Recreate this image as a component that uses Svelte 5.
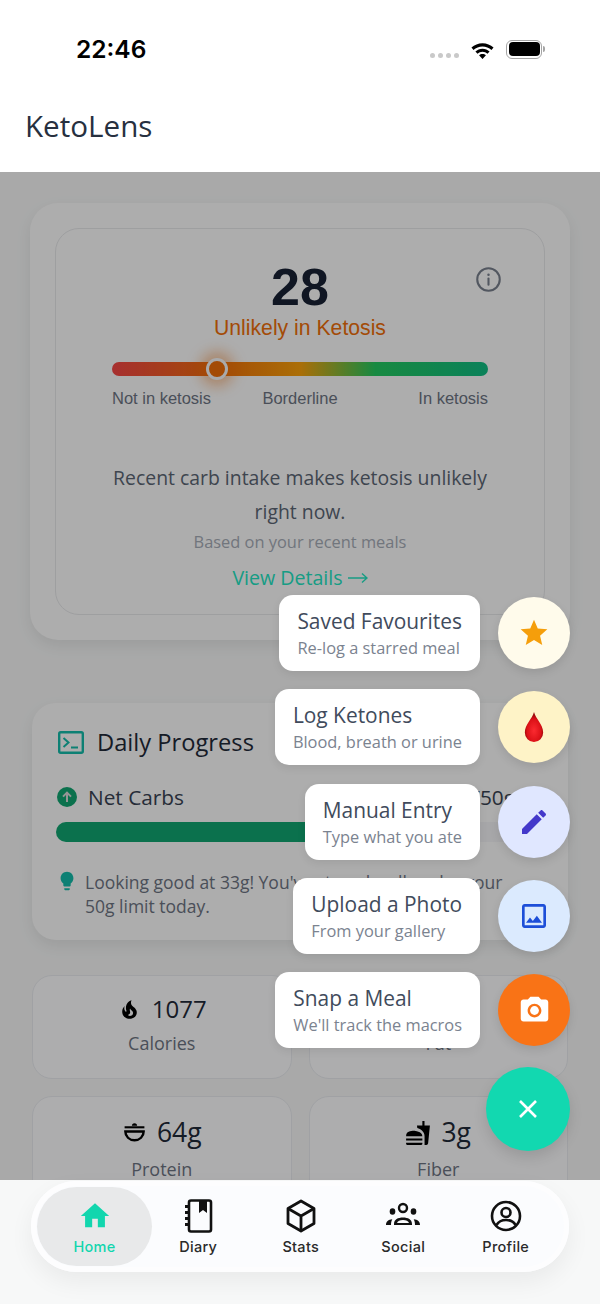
<script>
    const actions = [
        { title: "Saved Favourites", sub: "Re-log a starred meal", tone: "cream", icon: "star" },
        { title: "Log Ketones", sub: "Blood, breath or urine", tone: "sand", icon: "drop" },
        { title: "Manual Entry", sub: "Type what you ate", tone: "lilac", icon: "edit" },
        { title: "Upload a Photo", sub: "From your gallery", tone: "sky", icon: "image" },
        { title: "Snap a Meal", sub: "We'll track the macros", tone: "orange", icon: "camera" }
    ]

    const tabs = ["Home", "Diary", "Stats", "Social", "Profile"]
</script>

<div class="screen">
    <div class="status">
        <span class="time">22:46</span>
        <div class="status-icons">
            <div class="dots"><i></i><i></i><i></i><i></i></div>
            <svg class="wifi" viewBox="0 0 24 18" width="25" height="19">
                <path d="M12 3C7.9 3 4.3 4.6 1.4 7.1L3.4 9.4C5.7 7.3 8.7 6 12 6s6.3 1.3 8.6 3.4l2-2.3C19.7 4.6 16.1 3 12 3z" fill="#000"/>
                <path d="M12 8.2c-2.6 0-5 1-6.8 2.7l2 2.2c1.3-1.2 3-1.9 4.8-1.9s3.5.7 4.8 1.900l2-2.200C17 9.2 14.6 8.2 12 8.2z" fill="#000"/>
                <path d="M12 13.4c-1.3 0-2.4.5-3.3 1.2L12 18l3.3-3.4c-.9-.7-2-1.2-3.3-1.2z" fill="#000"/>
            </svg>
            <div class="battery"><span></span></div>
        </div>
    </div>

    <header class="top">KetoLens</header>

    <main class="body">
        <section class="card score-card">
            <div class="score-inner">
                <svg class="info" viewBox="0 0 24 24" width="25" height="25" fill="none" stroke="#767d8a" stroke-width="2">
                    <circle cx="12" cy="12" r="10.800"/>
                    <path d="M12 11v6" stroke-linecap="round"/>
                    <circle cx="12" cy="7.400" r="1.200" fill="#767d8a" stroke="none"/>
                </svg>
                <div class="score">28</div>
                <div class="verdict">Unlikely in Ketosis</div>
                <div class="gauge">
                    <div class="thumb"></div>
                </div>
                <div class="gauge-labels">
                    <span>Not in ketosis</span>
                    <span>Borderline</span>
                    <span>In ketosis</span>
                </div>
                <p class="summary">Recent carb intake makes ketosis unlikely right now.</p>
                <p class="basis">Based on your recent meals</p>
                <div class="details">
                    View Details
                    <svg viewBox="0 0 20 12" width="20" height="12" fill="none" stroke="#22e0bd" stroke-width="1.400">
                        <path d="M0 6h19M14 1.500L19 6l-5 4.500"/>
                    </svg>
                </div>
            </div>
        </section>

        <section class="card progress-card">
            <div class="progress-title">
                <svg viewBox="0 0 26 23" width="26" height="23" fill="none" stroke="#14b8a6" stroke-width="2.400">
                    <rect x="1.200" y="1.200" width="23.600" height="20.600" rx="1.500"/>
                    <path d="M5.500 7l5 4.500-5 4.500" stroke-width="2"/>
                    <path d="M13 16.500h7" stroke-width="2"/>
                </svg>
                <h2>Daily Progress</h2>
            </div>
            <div class="macro-row">
                <svg viewBox="0 0 20 20" width="20" height="20">
                    <circle cx="10" cy="10" r="10" fill="#10a36f"/>
                    <path d="M10 15V6M6 9.600L10 5.600l4 4" fill="none" stroke="#d6d6d6" stroke-width="2"/>
                </svg>
                <span class="macro-name">Net Carbs</span>
                <span class="macro-val">33g /50g</span>
            </div>
            <div class="track"><div class="fill" style="width: 66%"></div></div>
            <div class="tip">
                <svg viewBox="0 0 24 24" width="22" height="22" fill="#14b8a6">
                    <path d="M9 21c0 .5.4 1 1 1h4c.6 0 1-.5 1-1v-1H9v1zm3-19C8.100 2 5 5.100 5 9c0 2.400 1.200 4.500 3 5.700V17c0 .5.4 1 1 1h6c.6 0 1-.5 1-1v-2.300c1.800-1.300 3-3.400 3-5.700 0-3.900-3.100-7-7-7z"/>
                </svg>
                <p>Looking good at 33g! You've stayed well under your 50g limit today.</p>
            </div>
        </section>

        <section class="tiles">
            <div class="tile">
                <div class="tile-value">
                    <svg viewBox="0 0 24 24" width="25" height="25"><path d="M17.66 11.2C17.43 10.9 17.15 10.64 16.89 10.38C16.22 9.78 15.46 9.35 14.82 8.72C13.33 7.26 13 4.85 13.95 3C13 3.23 12.17 3.75 11.46 4.32C8.87 6.4 7.85 10.07 9.07 13.22C9.11 13.32 9.15 13.42 9.15 13.55C9.15 13.77 9 13.97 8.8 14.05C8.57 14.15 8.33 14.09 8.14 13.93C8.08 13.88 8.04 13.83 8 13.76C6.87 12.33 6.69 10.28 7.45 8.64C5.78 10 4.87 12.3 5 14.47C5.06 14.97 5.12 15.47 5.29 15.97C5.43 16.57 5.7 17.17 6 17.7C7.08 19.43 8.95 20.67 10.96 20.92C13.1 21.19 15.39 20.8 17.03 19.32C18.86 17.66 19.5 15 18.56 12.72L18.43 12.46C18.22 12 17.66 11.2 17.66 11.2M14.5 17.5C14.22 17.74 13.76 18 13.4 18.1C12.28 18.5 11.16 17.94 10.5 17.28C11.69 17 12.4 16.12 12.61 15.23C12.78 14.43 12.46 13.77 12.33 13C12.21 12.26 12.23 11.63 12.5 10.94C12.69 11.32 12.89 11.7 13.13 12C13.9 13 15.11 13.44 15.37 14.8C15.41 14.94 15.43 15.08 15.43 15.23C15.46 16.05 15.1 16.95 14.5 17.5H14.5Z"/></svg>
                    <span>1077</span>
                </div>
                <div class="tile-label">Calories</div>
            </div>
            <div class="tile">
                <div class="tile-value"></div>
                <div class="tile-label">Fat</div>
            </div>
            <div class="tile tall">
                <div class="tile-value">
                    <svg viewBox="0 0 24 20" width="25" height="21" fill="none" stroke="#000" stroke-width="2.300">
                        <path d="M9.500 3.500a2.500 2.500 0 0 1 5 0z" fill="#000" stroke="none"/>
                        <path d="M2.500 5h19" stroke-width="2"/>
                        <path d="M3.200 9h17.600c0 4.800-3.800 8.500-8.800 8.500S3.200 13.800 3.200 9z"/>
                    </svg>
                    <span>64g</span>
                </div>
                <div class="tile-label">Protein</div>
            </div>
            <div class="tile tall">
                <div class="tile-value">
                    <svg viewBox="0 0 24 24" width="26" height="26"><path d="M18.06 22.99h1.66c.84 0 1.53-.64 1.63-1.46L23 5.05h-5V1h-1.97v4.05h-4.97l.3 2.34c1.71.47 3.31 1.32 4.27 2.26 1.44 1.42 2.43 2.89 2.43 5.29v8.05zM1 21.99V21h15.03v.99c0 .55-.45 1-1.01 1H2.01c-.56 0-1.01-.45-1.01-1zm15.03-7c0-4.5-7.5-5-7.52-5-3.5 0-7.5.5-7.5 5h15.02zM1.02 17h15v2h-15z"/></svg>
                    <span>3g</span>
                </div>
                <div class="tile-label">Fiber</div>
            </div>
        </section>

        <div class="scrim"></div>

        <div class="fab-stack">
            {#each actions as action}
                <div class="action">
                    <div class="action-label">
                        <div class="action-title">{action.title}</div>
                        <div class="action-sub">{action.sub}</div>
                    </div>
                    <div class="action-btn {action.tone}">
                        {#if action.icon == "star"}
                            <svg viewBox="0 0 24 24" width="32" height="32" fill="#f59e0b"><path d="M12 17.27L18.18 21l-1.64-7.03L22 9.24l-7.19-.61L12 2 9.19 8.63 2 9.24l5.46 4.73L5.82 21z"/></svg>
                        {:else if action.icon == "drop"}
                            <svg viewBox="0 0 24 36" width="20" height="30">
                                <defs>
                                    <radialGradient id="blood" cx="0.5" cy="0.62" r="0.55">
                                        <stop offset="0" stop-color="#fb2a30"/>
                                        <stop offset="0.7" stop-color="#dc1117"/>
                                        <stop offset="1" stop-color="#8f0508"/>
                                    </radialGradient>
                                </defs>
                                <path d="M12 0C10 8 1 15 1 24.500a11 11.500 0 0 0 22 0C23 15 14 8 12 0z" fill="url(#blood)"/>
                            </svg>
                        {:else if action.icon == "edit"}
                            <svg viewBox="0 0 24 24" width="32" height="32" fill="#4338ca"><path d="M3 17.25V21h3.75L17.81 9.94l-3.75-3.75L3 17.25zM20.71 7.04c.39-.39.39-1.02 0-1.41l-2.34-2.34c-.39-.39-1.02-.39-1.41 0l-1.83 1.83 3.75 3.75 1.83-1.83z"/></svg>
                        {:else if action.icon == "image"}
                            <svg viewBox="0 0 24 24" width="32" height="32" fill="#1d4ed8"><path d="M19 5v14H5V5h14m0-2H5c-1.1 0-2 .9-2 2v14c0 1.1.9 2 2 2h14c1.1 0 2-.9 2-2V5c0-1.1-.9-2-2-2zm-4.86 8.86l-3 3.87L9 13.14 6 17h12l-3.86-5.14z"/></svg>
                        {:else}
                            <svg viewBox="0 0 24 24" width="33" height="33" fill="#fff"><circle cx="12" cy="12" r="3.2"/><path d="M9 2L7.17 4H4c-1.1 0-2 .9-2 2v12c0 1.1.9 2 2 2h16c1.1 0 2-.9 2-2V6c0-1.1-.9-2-2-2h-3.17L15 2H9zm3 15c-2.76 0-5-2.24-5-5s2.24-5 5-5 5 2.24 5 5-2.24 5-5 5z"/></svg>
                        {/if}
                    </div>
                </div>
            {/each}
            <button class="fab-main" aria-label="Close">
                <svg viewBox="0 0 20 20" width="20" height="20" fill="none" stroke="#fff" stroke-width="2.600">
                    <path d="M2 2l16 16M18 2L2 18"/>
                </svg>
            </button>
        </div>
    </main>

    <footer class="bottom">
        <nav class="tabbar">
            {#each tabs as tab, i}
                <div class="tab" class:active={i == 0}>
                    {#if tab == "Home"}
                        <svg viewBox="0 0 24 24" width="34" height="34" fill="#12d6ae"><path d="M10 20v-6h4v6h5v-8h3L12 3 2 12h3v8z"/></svg>
                    {:else if tab == "Diary"}
                        <svg viewBox="0 0 32 34" width="32" height="34">
                            <path d="M7 3.500a2 2 0 0 1 2-2h18a2 2 0 0 1 2 2v27a2 2 0 0 1-2 2H9a2 2 0 0 1-2-2z" fill="none" stroke="#111" stroke-width="2.600"/>
                            <path d="M17 2h8v12l-4-3-4 3z" fill="#111"/>
                            <path d="M3 6h5v3H3zM3 12h5v3H3zM3 18h5v3H3zM3 24h5v3H3z" fill="#111"/>
                        </svg>
                    {:else if tab == "Stats"}
                        <svg viewBox="0 0 32 34" width="32" height="34" fill="none" stroke="#111" stroke-width="2.800" stroke-linejoin="round">
                            <path d="M16 2l13 7.500v15L16 32 3 24.500v-15z"/>
                            <path d="M3 9.500l13 7.500 13-7.500M16 17v15"/>
                        </svg>
                    {:else if tab == "Social"}
                        <svg viewBox="0 0 36 28" width="36" height="28" fill="#111">
                            <circle cx="18" cy="6" r="4" fill="none" stroke="#111" stroke-width="2.400"/>
                            <ellipse cx="7.500" cy="9.500" rx="2.800" ry="3.200"/>
                            <ellipse cx="28.500" cy="9.500" rx="2.800" ry="3.200"/>
                            <path d="M9 22c0-4.500 4-6.500 9-6.500s9 2 9 6.500v1H9zm3 -1h12c-.5-2-3-3-6-3s-5.500 1-6 3z" fill-rule="evenodd"/>
                            <path d="M1 23c0-3.500 2.300-5.600 6.300-5.800-.8 1.600-1.300 3.400-1.300 5.800zM35 23c0-3.500-2.300-5.600-6.300-5.800.8 1.600 1.300 3.400 1.300 5.800z"/>
                        </svg>
                    {:else}
                        <svg viewBox="0 0 32 32" width="32" height="32" fill="none" stroke="#111" stroke-width="2.600">
                            <circle cx="16" cy="16" r="14"/>
                            <circle cx="16" cy="12.500" r="4.500"/>
                            <path d="M6.500 25c2-3.500 5.500-5 9.500-5s7.500 1.500 9.500 5"/>
                        </svg>
                    {/if}
                    <span>{tab}</span>
                </div>
            {/each}
        </nav>
    </footer>
</div>

<style>
    :global(body) {
        margin: 0;
        background: #f7f8f8;
    }

    .screen {
        width: 600px;
        height: 1304px;
        display: flex;
        flex-direction: column;
        overflow: hidden;
        font-family: "Open Sans", sans-serif;
        color: #1f2937;
    }

    .status {
        height: 88px;
        background: #fff;
        display: flex;
        justify-content: space-between;
        align-items: center;
        padding: 10px 58px 0 76px;
        box-sizing: border-box;
    }

    .time {
        font-family: Inter, sans-serif;
        font-weight: 600;
        font-size: 24.500px;
        color: #000;
    }

    .status-icons {
        display: flex;
        align-items: center;
        gap: 11px;
    }

    .dots {
        display: flex;
        gap: 3px;
        margin-top: 13px;
    }

    .dots i {
        width: 5px;
        height: 5px;
        border-radius: 50%;
        background: #c9c9c9;
    }

    .battery {
        width: 36px;
        height: 19px;
        border: 1.500px solid #a5a5a5;
        border-radius: 6px;
        padding: 1.500px;
        box-sizing: border-box;
        position: relative;
    }

    .battery span {
        display: block;
        width: 100%;
        height: 100%;
        background: #000;
        border-radius: 4px;
    }

    .battery::after {
        content: "";
        position: absolute;
        right: -4px;
        top: 5px;
        width: 2px;
        height: 6px;
        background: #a5a5a5;
        border-radius: 0 2px 2px 0;
    }

    .top {
        height: 84px;
        background: #fff;
        padding: 0 25px 10px;
        box-sizing: border-box;
        display: flex;
        align-items: center;
        font-size: 29.600px;
        color: #27303f;
    }

    .body {
        flex: 1;
        min-height: 0;
        position: relative;
        overflow: hidden;
        background: #f2f3f3;
        padding: 31px 32px 0;
        display: flex;
        flex-direction: column;
        align-items: stretch;
    }

    .card {
        background: #f8f8f8;
        box-shadow: 0 6px 16px rgba(0, 0, 0, 0.08);
    }

    .score-card {
        margin: 0 -2px;
        height: 437px;
        padding: 25px;
        box-sizing: border-box;
        border-radius: 28px;
        flex-shrink: 0;
    }

    .score-inner {
        position: relative;
        height: 387px;
        border: 1.500px solid #e3e4e6;
        border-radius: 24px;
        box-sizing: border-box;
        padding: 28px 56px 0;
        text-align: center;
    }

    .info {
        position: absolute;
        top: 38px;
        right: 43px;
    }

    .score {
        font-family: "Liberation Sans", Arial, sans-serif;
        font-weight: 700;
        font-size: 52px;
        line-height: 60px;
        color: #172033;
    }

    .verdict {
        font-family: "Liberation Sans", Arial, sans-serif;
        font-size: 21.200px;
        line-height: 22px;
        color: #ea6c0a;
    }

    .gauge {
        position: relative;
        height: 14px;
        margin-top: 23px;
        border-radius: 7px;
        background: linear-gradient(90deg, #ef4444 0%, #ea6c0a 28%, #f59e0b 50%, #22c55e 70%, #10b981 100%);
    }

    .thumb {
        position: absolute;
        left: 94px;
        top: -4px;
        width: 22px;
        height: 22px;
        box-sizing: border-box;
        border: 3.500px solid #f3f4f6;
        border-radius: 50%;
        background: #ea6c0a;
        box-shadow: 0 0 14px 6px rgba(234, 108, 10, 0.42);
    }

    .gauge-labels {
        display: grid;
        grid-template-columns: 1fr auto 1fr;
        margin-top: 13px;
        font-family: "Liberation Sans", Arial, sans-serif;
        font-size: 16.500px;
        line-height: 18px;
        color: #6b7280;
        text-align: center;
    }

    .gauge-labels span:first-child {
        text-align: left;
    }

    .gauge-labels span:last-child {
        text-align: right;
    }

    .summary {
        margin: 54px -6px 0;
        font-size: 19.400px;
        line-height: 34px;
        color: #5a6472;
    }

    .basis {
        margin: 2px 0 0;
        font-size: 16.400px;
        line-height: 22px;
        color: #a3a9b3;
    }

    .details {
        margin-top: 11px;
        display: flex;
        justify-content: center;
        align-items: center;
        gap: 5px;
        font-size: 19.600px;
        line-height: 27px;
        color: #22e0bd;
    }

    .progress-card {
        margin-top: 63px;
        height: 237px;
        border-radius: 24px;
        padding: 28px 24px 0;
        box-sizing: border-box;
        flex-shrink: 0;
    }

    .progress-title {
        display: flex;
        align-items: center;
        gap: 14px;
        padding-left: 2px;
    }

    .progress-title h2 {
        margin: -1px 0 0 -1px;
        font-weight: 400;
        font-size: 23.700px;
        line-height: 24px;
        color: #1f2937;
    }

    .macro-row {
        display: flex;
        align-items: center;
        margin-top: 29px;
        padding-left: 1px;
    }

    .macro-name {
        margin-left: 11px;
        font-size: 20.800px;
        line-height: 28px;
        color: #374151;
    }

    .macro-val {
        margin-left: auto;
        margin-right: 29px;
        font-size: 20.800px;
        line-height: 28px;
        color: #374151;
    }

    .track {
        margin-top: 11px;
        height: 20px;
        border-radius: 10px;
        background: #f0f0f2;
    }

    .fill {
        height: 100%;
        border-radius: 10px;
        background: #10a36f;
    }

    .tip {
        display: flex;
        gap: 7px;
        margin-top: 28px;
    }

    .tip svg {
        flex-shrink: 0;
    }

    .tip p {
        margin: 0;
        max-width: 432px;
        font-size: 17.500px;
        line-height: 24px;
        color: #6b7280;
    }

    .tiles {
        display: grid;
        grid-template-columns: 1fr 1fr;
        grid-auto-rows: 104px;
        gap: 17px 17px;
        margin-top: 35px;
    }

    .tile {
        border: 1.500px solid #e5e7eb;
        border-radius: 20px;
        background: #f8f8f9;
        box-sizing: border-box;
        display: flex;
        flex-direction: column;
        align-items: center;
        padding-top: 16px;
    }

    .tile-value {
        display: flex;
        align-items: center;
        gap: 10px;
        min-height: 34px;
        font-size: 24px;
        line-height: 34px;
        color: #1f2937;
    }

    .tall .tile-value {
        min-height: 39px;
        font-size: 26.500px;
        line-height: 39px;
    }

    .tile-label {
        margin-top: 5px;
        font-size: 18px;
        line-height: 24px;
        color: #6b7280;
    }

    .scrim {
        position: absolute;
        inset: 0;
        background: rgba(0, 0, 0, 0.3);
    }

    .fab-stack {
        position: absolute;
        right: 30px;
        bottom: 29.500px;
        display: flex;
        flex-direction: column;
        align-items: flex-end;
        gap: 18.300px;
    }

    .action {
        display: flex;
        align-items: center;
        gap: 18px;
        height: 76px;
    }

    .action-label {
        height: 76px;
        box-sizing: border-box;
        padding: 11px 18px 0;
        background: #fff;
        border-radius: 14px;
        box-shadow: 0 3px 8px rgba(0, 0, 0, 0.08);
    }

    .action-title {
        font-size: 20.900px;
        line-height: 30px;
        color: #414b5c;
    }

    .action-sub {
        font-size: 16.400px;
        line-height: 24px;
        color: #7b8390;
    }

    .action-btn {
        width: 72px;
        height: 72px;
        border-radius: 50%;
        display: flex;
        align-items: center;
        justify-content: center;
        box-shadow: 0 4px 10px rgba(0, 0, 0, 0.1);
    }

    .cream { background: #fffbeb; }
    .sand { background: #fef3c7; }
    .lilac { background: #e0e7ff; }
    .sky { background: #dbeafe; }
    .orange { background: #f97316; }

    .fab-main {
        width: 84px;
        height: 84px;
        border: none;
        padding: 0;
        border-radius: 50%;
        background: #12d8b0;
        display: flex;
        align-items: center;
        justify-content: center;
        box-shadow: 0 6px 14px rgba(0, 0, 0, 0.12);
    }

    .bottom {
        height: 124px;
        flex-shrink: 0;
        background: #f7f8f8;
        padding: 1px 31px 0;
        box-sizing: border-box;
        position: relative;
    }

    .tabbar {
        height: 91px;
        box-sizing: border-box;
        padding: 6px;
        border-radius: 46px;
        background: #fbfcfe;
        box-shadow: 0 10px 24px rgba(0, 0, 0, 0.06), inset 0 0 0 5px #fdfdfe;
        display: flex;
    }

    .tab {
        width: 102.500px;
        display: flex;
        flex-direction: column;
        align-items: center;
        justify-content: center;
        gap: 5px;
        font-family: Inter, sans-serif;
        font-weight: 500;
        font-size: 14.500px;
        letter-spacing: 0.3px;
        color: #2a2a2a;
    }

    .tab svg {
        height: 34px;
    }

    .tab.active {
        width: 115px;
        margin-right: -5px;
        background: #e8e9ea;
        border-radius: 40px;
        color: #12d6ae;
    }
</style>
